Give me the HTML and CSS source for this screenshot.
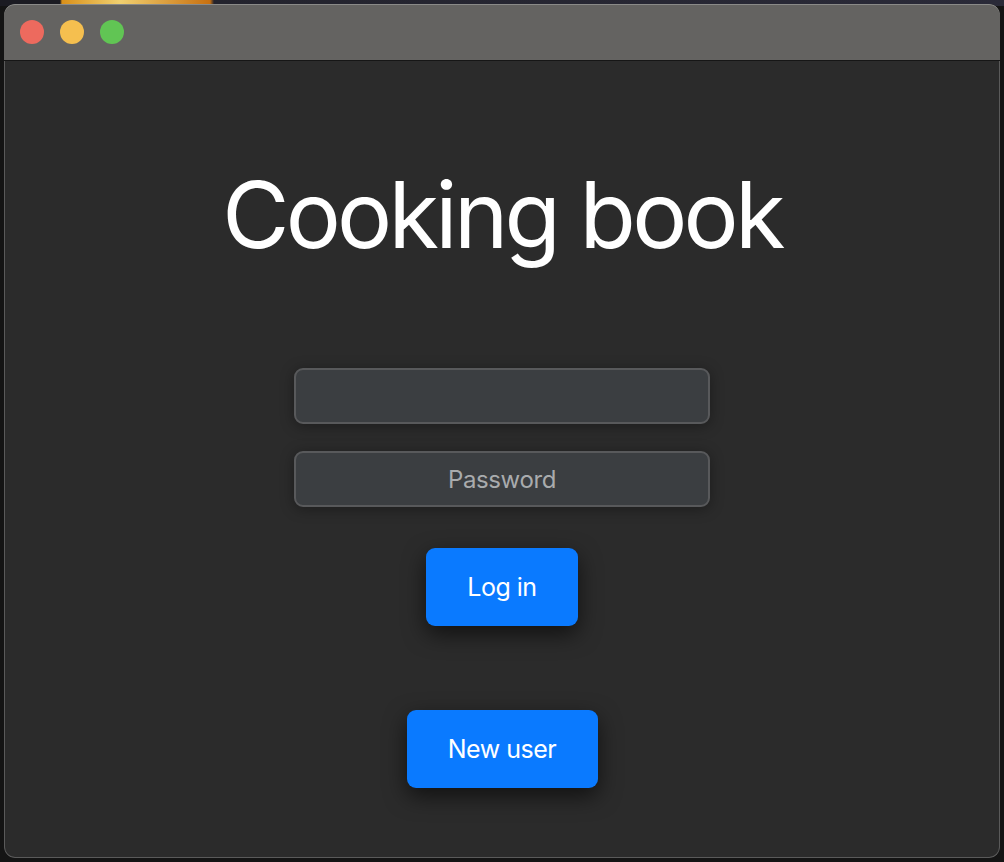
FILE: index.html
```html
<!DOCTYPE html>
<html>
<head>
<meta charset="utf-8">
<link rel="stylesheet" href="styles.css">
</head>
<body>
<div class="backdrop-art"></div>
<div class="window">
  <div class="titlebar">
    <span class="light red"></span>
    <span class="light yellow"></span>
    <span class="light green"></span>
  </div>
  <div class="content">
    <h1 class="title">Cooking book</h1>
    <div class="field"></div>
    <div class="field field-gap"><span class="placeholder">Password</span></div>
    <button class="btn btn-login">Log in</button>
    <button class="btn btn-new">New user</button>
  </div>
</div>
</body>
</html>
```
FILE: styles.css
```css
html, body {
  margin: 0;
  padding: 0;
  height: 100%;
}
body {
  background: #141414;
  padding: 4px;
  box-sizing: border-box;
  font-family: Inter, "Noto Sans", sans-serif;
  overflow: hidden;
  position: relative;
}
.backdrop-art {
  position: absolute;
  left: 0;
  top: 0;
  width: 1004px;
  height: 6px;
  background: linear-gradient(90deg, #1b1b22 0, #1b1b22 60px, #d9901a 62px, #f0d070 120px, #c87010 210px, #23232d 214px, #2a2a38 100%);
}
.window {
  position: relative;
  height: 854px;
  border-radius: 11px;
  overflow: hidden;
  background: #2b2b2b;
  display: flex;
  flex-direction: column;
}
.titlebar {
  height: 56px;
  flex: none;
  background: #646361;
  border-bottom: 1px solid #161616;
  box-shadow: inset 0 1px 0 #8a8a88;
  display: flex;
  align-items: center;
  padding-left: 16px;
  gap: 16px;
  border-radius: 11px 11px 0 0;
}
.light {
  width: 24px;
  height: 24px;
  border-radius: 50%;
}
.red { background: #ed6a5e; }
.yellow { background: #f5bf4f; }
.green { background: #61c554; }
.content {
  flex: 1;
  display: flex;
  flex-direction: column;
  align-items: center;
  border-left: 1px solid #5a5a5a;
  border-right: 1px solid #5a5a5a;
  border-bottom: 1px solid #5a5a5a;
  border-radius: 0 0 11px 11px;
}
.title {
  margin: 98px 0 0 0;
  font-size: 92px;
  line-height: 112px;
  font-weight: 400;
  color: #ffffff;
  letter-spacing: -3.7px;
}
.field {
  margin-top: 97px;
  width: 416px;
  height: 56px;
  box-sizing: border-box;
  background: #3b3e41;
  border: 2px solid #58595b;
  border-radius: 9px;
  box-shadow: 0 2px 14px rgba(0,0,0,0.35);
  display: flex;
  align-items: center;
  justify-content: center;
}
.field-gap {
  margin-top: 27px;
}
.placeholder {
  color: #a9abad;
  font-size: 24px;
  letter-spacing: -0.4px;
}
.btn {
  border: none;
  background: #0a7aff;
  color: #ffffff;
  font-family: Inter, "Noto Sans", sans-serif;
  font-size: 25px;
  letter-spacing: -0.5px;
  height: 78px;
  border-radius: 9px;
  box-shadow: 0 8px 22px rgba(0,0,0,0.6);
  padding: 0;
}
.btn-login {
  margin-top: 41px;
  width: 152px;
}
.btn-new {
  margin-top: 84px;
  width: 191px;
}
```
